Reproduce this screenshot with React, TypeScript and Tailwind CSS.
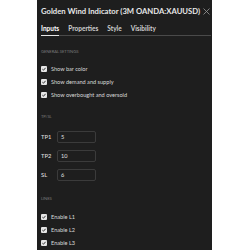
const FONT = { fontFamily: "Lato, 'Open Sans', sans-serif" };

function Check({ label }: { label: string }) {
  return (
    <div className="flex h-[13px] items-center gap-[4px] pl-[4px]">
      <span className="flex h-[6px] w-[6px] items-center justify-center rounded-[1px] bg-[#e6e6e6]">
        <svg viewBox="0 0 6 6" className="h-[6px] w-[6px]">
          <path d="M1.4 3.2 L2.5 4.2 L4.6 1.8" fill="none" stroke="#222" strokeWidth="0.9" />
        </svg>
      </span>
      <span className="text-[5.6px] leading-none text-[#d8d8d8]">{label}</span>
    </div>
  );
}

function Field({ label, value }: { label: string; value: string }) {
  return (
    <div className="flex h-[19px] items-center pl-[4px]">
      <span className="w-[16px] text-[5.8px] leading-none font-semibold text-[#d8d8d8]">{label}</span>
      <div className="flex h-[12px] w-[39px] items-center rounded-[2px] border border-[#3b3b3b] pl-[3px]">
        <span className="text-[5.6px] leading-none text-[#e0e0e0]">{value}</span>
      </div>
    </div>
  );
}

function Section({ title, mt }: { title: string; mt: string }) {
  return (
    <div className={`flex h-[10px] items-center pl-[4px] ${mt}`}>
      <span className="text-[4.2px] uppercase leading-none tracking-tight text-[#7a7a7a]">{title}</span>
    </div>
  );
}

export default function App() {
  const tabs = ["Inputs", "Properties", "Style", "Visibility"];
  return (
    <div className="flex h-[250px] w-[250px] bg-white" style={FONT}>
      <div className="ml-[37px] h-full w-[175px] overflow-hidden bg-[#1e1e1e]">
        {/* header */}
        <div className="flex h-[23px] items-center pl-[4px]">
          <span className="text-[7.7px] font-bold leading-none whitespace-nowrap text-[#e6e6e6]">
            Golden Wind Indicator (3M OANDA:XAUUSD)
          </span>
          <svg viewBox="0 0 7 7" className="ml-[3px] h-[7px] w-[7px] shrink-0">
            <path d="M0.5 0.5 L6.5 6.5 M6.5 0.5 L0.5 6.5" stroke="#9a9a9a" strokeWidth="0.8" />
          </svg>
        </div>

        {/* tabs */}
        <div className="flex h-[12px] items-center gap-[9px] pl-[4px]">
          {tabs.map((t, i) => (
            <span
              key={t}
              className={`text-[6.5px] font-bold leading-none ${i === 0 ? "text-white" : "text-[#d0d0d0]"}`}
            >
              {t}
            </span>
          ))}
        </div>
        <div className="ml-[4px] flex h-[1px] w-[170px] bg-[#4a4a4a]">
          <div className="h-full w-[18px] bg-[#e6e6e6]" />
        </div>

        <Section title="General settings" mt="mt-[11px]" />
        <div className="mt-[5px]">
          <Check label="Show bar color" />
          <Check label="Show demand and supply" />
          <Check label="Show overbought and oversold" />
        </div>

        <Section title="TP/SL" mt="mt-[11px]" />
        <div className="mt-[5px]">
          <Field label="TP1" value="5" />
          <Field label="TP2" value="10" />
          <Field label="SL" value="6" />
        </div>

        <Section title="Lines" mt="mt-[10px]" />
        <div className="mt-[6px]">
          <Check label="Enable L1" />
          <Check label="Enable L2" />
          <Check label="Enable L3" />
        </div>
      </div>
    </div>
  );
}
